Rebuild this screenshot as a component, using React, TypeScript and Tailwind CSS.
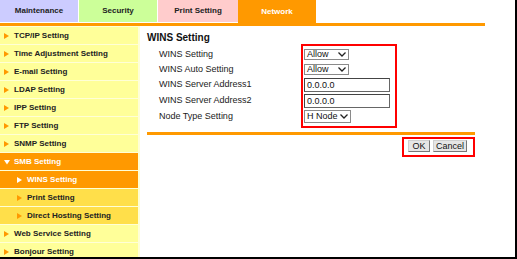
import React from "react";

const ORANGE = "#ff9900";

function Arrow({ down, color }: { down?: boolean; color: string }) {
  if (down) {
    return (
      <svg width="6" height="6" viewBox="0 0 6 6" className="shrink-0">
        <polygon points="0,1 6,1 3,5.5" fill={color} />
      </svg>
    );
  }
  return (
    <svg width="5" height="6" viewBox="0 0 5 6" className="shrink-0">
      <polygon points="0,0 5,3 0,6" fill={color} />
    </svg>
  );
}

type Item = { label: string; kind: "top" | "open" | "active" | "sub" };

const items: Item[] = [
  { label: "TCP/IP Setting", kind: "top" },
  { label: "Time Adjustment Setting", kind: "top" },
  { label: "E-mail Setting", kind: "top" },
  { label: "LDAP Setting", kind: "top" },
  { label: "IPP Setting", kind: "top" },
  { label: "FTP Setting", kind: "top" },
  { label: "SNMP Setting", kind: "top" },
  { label: "SMB Setting", kind: "open" },
  { label: "WINS Setting", kind: "active" },
  { label: "Print Setting", kind: "sub" },
  { label: "Direct Hosting Setting", kind: "sub" },
  { label: "Web Service Setting", kind: "top" },
  { label: "Bonjour Setting", kind: "top" },
];

function SideItem({ item }: { item: Item }) {
  if (item.kind === "top") {
    return (
      <div className="flex items-center h-[17px] mb-px bg-[#ffff99] pl-[4px] gap-[5px] text-[#222]">
        <Arrow color={ORANGE} />
        <span>{item.label}</span>
      </div>
    );
  }
  if (item.kind === "open") {
    return (
      <div className="flex items-center h-[17px] mb-px bg-[#ff9900] pl-[4px] gap-[4px] text-white">
        <Arrow down color="#ffffff" />
        <span>{item.label}</span>
      </div>
    );
  }
  if (item.kind === "active") {
    return (
      <div className="flex items-center h-[17px] mb-px bg-[#ff9900] pl-[17px] gap-[5px] text-white">
        <Arrow color="#ffffff" />
        <span>{item.label}</span>
      </div>
    );
  }
  return (
    <div className="flex items-center h-[17px] mb-px bg-[#ffdf4a] pl-[17px] gap-[5px] text-[#222]">
      <Arrow color={ORANGE} />
      <span>{item.label}</span>
    </div>
  );
}

function FakeSelect({ value, width, height }: { value: string; width: string; height: string }) {
  return (
    <div
      className={`flex items-center justify-between bg-white border border-[#8a8a8a] pl-[2px] pr-[2px] gap-[2px] text-[9px] leading-none text-[#111] ${width} ${height}`}
    >
      <span className="whitespace-nowrap">{value}</span>
      <svg width="8" height="5" viewBox="0 0 8 5" className="shrink-0">
        <polyline points="0.5,0.5 4,4 7.5,0.5" fill="none" stroke="#222" strokeWidth="1.3" />
      </svg>
    </div>
  );
}

function FakeInput({ value }: { value: string }) {
  return (
    <div className="flex items-center w-[86px] h-[14px] bg-white border border-[#666] border-t-[#444] border-l-[#444] pl-[2px] text-[9px] leading-none text-[#111]">
      {value}
    </div>
  );
}

function Btn({ label, width }: { label: string; width: string }) {
  return (
    <div
      className={`flex items-center justify-center h-[12px] ${width} bg-[#e6e6e6] border border-[#777] border-t-[#cfcfcf] border-l-[#cfcfcf] text-[9px] leading-none text-[#111]`}
    >
      {label}
    </div>
  );
}

export default function App() {
  return (
    <div className="w-[517px] h-[259px] overflow-hidden bg-white border-r-2 border-b-2 border-black font-['Liberation_Sans',Arial,sans-serif]">
      {/* Tabs */}
      <div className="flex h-[23px] text-[8px] font-bold">
        <div className="w-[79px] h-[22px] bg-[#ccccff] border-r border-white flex items-center justify-center text-[#222]">
          Maintenance
        </div>
        <div className="w-[79px] h-[22px] bg-[#ccff99] border-r border-white flex items-center justify-center text-[#222]">
          Security
        </div>
        <div className="w-[80px] h-[22px] bg-[#ffcccc] flex items-center justify-center text-[#222]">
          Print Setting
        </div>
        <div className="w-[78px] h-[23px] bg-[#ff9900] flex items-center justify-center text-white">
          Network
        </div>
      </div>
      <div className="w-[485px] h-[3px] bg-[#ff9900]" />

      <div className="flex">
        {/* Sidebar */}
        <div className="w-[140px] pt-px pr-[2px] bg-[#ffffd6] text-[8px] font-bold">
          {items.map((it) => (
            <SideItem key={it.label} item={it} />
          ))}
        </div>

        {/* Main */}
        <div className="flex-1 pl-[7px] pt-[6px]">
          <div className="h-[12px] leading-[12px] text-[10px] font-bold text-[#111]">WINS Setting</div>

          <div className="flex items-start text-[9px] text-[#222]">
            <div className="w-[154px] pl-[12px] pt-[3px] flex flex-col">
              <div className="h-[15px] flex items-center">WINS Setting</div>
              <div className="h-[15px] flex items-center">WINS Auto Setting</div>
              <div className="h-[16px] flex items-center">WINS Server Address1</div>
              <div className="h-[16px] flex items-center">WINS Server Address2</div>
              <div className="h-[15px] flex items-center">Node Type Setting</div>
            </div>
            <div className="w-[96px] border-2 border-[#ff0000] pt-px pb-[2px] pl-px flex flex-col">
              <div className="h-[15px] flex items-center">
                <FakeSelect value="Allow" width="w-[45px]" height="h-[11px]" />
              </div>
              <div className="h-[15px] flex items-center">
                <FakeSelect value="Allow" width="w-[45px]" height="h-[11px]" />
              </div>
              <div className="h-[16px] flex items-center">
                <FakeInput value="0.0.0.0" />
              </div>
              <div className="h-[16px] flex items-center">
                <FakeInput value="0.0.0.0" />
              </div>
              <div className="h-[15px] flex items-center">
                <FakeSelect value="H Node" width="w-[47px]" height="h-[13px]" />
              </div>
            </div>
          </div>

          <div className="mt-[4px] w-[328px] h-[3px] bg-[#ff9900]" />

          <div className="w-[328px] flex justify-end mt-[2px]">
            <div className="flex gap-[3px] border-2 border-[#ff0000] pt-px pb-[3px] pl-[4px] pr-[6px]">
              <Btn label="OK" width="w-[22px]" />
              <Btn label="Cancel" width="w-[34px]" />
            </div>
          </div>
        </div>
      </div>
    </div>
  );
}
